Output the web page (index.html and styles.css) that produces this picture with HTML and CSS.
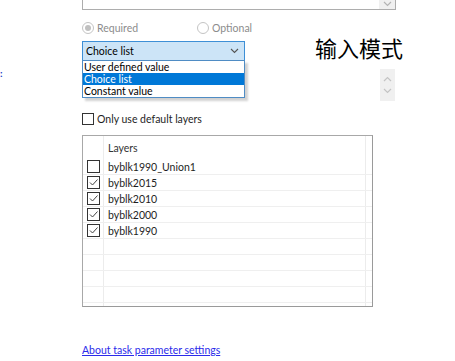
FILE: index.html
```html
<!DOCTYPE html>
<html lang="en">
<head>
  <meta charset="UTF-8" />
  <title>Task parameter</title>
  <link rel="stylesheet" href="styles.css">
</head>
<body>

  <span class="cut-label">:</span>
  <span class="note">输入模式</span>

  <div class="panel">
    <div class="top-box">
      <div class="scroll">
        <svg width="9" height="6" viewBox="0 0 9 6"><path d="M1 1l3.5 3.5L8 1" fill="none" stroke="#b4b4b4" stroke-width="1.2"/></svg>
      </div>
    </div>

    <div class="choice-row">
      <label class="radio"><span class="dot on"></span>Required</label>
      <label class="radio"><span class="dot"></span>Optional</label>
    </div>

    <div class="combo">
      <span>Choice list</span>
      <svg width="9" height="6" viewBox="0 0 9 6"><path d="M1 1l3.5 3.5L8 1" fill="none" stroke="#555" stroke-width="1.1"/></svg>
      <ul class="drop">
        <li>User defined value</li>
        <li class="sel">Choice list</li>
        <li>Constant value</li>
      </ul>
    </div>

    <div class="value-row">
      <div class="spin">
        <svg width="9" height="6" viewBox="0 0 9 6"><path d="M1 5l3.5-3.5L8 5" fill="none" stroke="#c4c4c4" stroke-width="1.2"/></svg>
        <svg width="9" height="6" viewBox="0 0 9 6"><path d="M1 1l3.5 3.5L8 1" fill="none" stroke="#c4c4c4" stroke-width="1.2"/></svg>
      </div>
    </div>

    <label class="check-row"><span class="box"></span>Only use default layers</label>

    <div class="layers">
      <div class="row head">
        <div class="c-check"></div>
        <div class="c-name">Layers</div>
        <div class="c-pad"></div>
      </div>
      <div class="row">
        <div class="c-check"><span class="box"></span></div>
        <div class="c-name">byblk1990_Union1</div>
        <div class="c-pad"></div>
      </div>
      <div class="row">
        <div class="c-check"><span class="box"><svg width="11" height="11" viewBox="0 0 11 11"><path d="M2 5.5l2.5 2.5L9.5 2.5" fill="none" stroke="#444" stroke-width="1"/></svg></span></div>
        <div class="c-name">byblk2015</div>
        <div class="c-pad"></div>
      </div>
      <div class="row">
        <div class="c-check"><span class="box"><svg width="11" height="11" viewBox="0 0 11 11"><path d="M2 5.5l2.5 2.5L9.5 2.5" fill="none" stroke="#444" stroke-width="1"/></svg></span></div>
        <div class="c-name">byblk2010</div>
        <div class="c-pad"></div>
      </div>
      <div class="row">
        <div class="c-check"><span class="box"><svg width="11" height="11" viewBox="0 0 11 11"><path d="M2 5.5l2.5 2.5L9.5 2.5" fill="none" stroke="#444" stroke-width="1"/></svg></span></div>
        <div class="c-name">byblk2000</div>
        <div class="c-pad"></div>
      </div>
      <div class="row">
        <div class="c-check"><span class="box"><svg width="11" height="11" viewBox="0 0 11 11"><path d="M2 5.5l2.5 2.5L9.5 2.5" fill="none" stroke="#444" stroke-width="1"/></svg></span></div>
        <div class="c-name">byblk1990</div>
        <div class="c-pad"></div>
      </div>
      <div class="row"><div class="c-check"></div><div class="c-name"></div><div class="c-pad"></div></div>
      <div class="row"><div class="c-check"></div><div class="c-name"></div><div class="c-pad"></div></div>
      <div class="row"><div class="c-check"></div><div class="c-name"></div><div class="c-pad"></div></div>
      <div class="row"><div class="c-check"></div><div class="c-name"></div><div class="c-pad"></div></div>
      <div class="row tail"><div class="c-check"></div><div class="c-name"></div><div class="c-pad"></div></div>
    </div>

    <a class="help-link" href="#">About task parameter settings</a>
  </div>

</body>
</html>
```

FILE: styles.css
```css
* {
  box-sizing: border-box;
}

body {
  font-family: 'Lato', sans-serif;
  font-size: 10.5px;
  margin: 0;
  padding: 0;
  background: #fff;
  color: #1e1e1e;
  position: relative;
  height: 361px;
  overflow: hidden;
}

.cut-label {
  position: absolute;
  left: 0;
  top: 67px;
  color: #2340c8;
  font-size: 10px;
  font-weight: bold;
  line-height: 12px;
}

.note {
  position: absolute;
  left: 315px;
  top: 33px;
  font-family: 'Noto Sans CJK SC', sans-serif;
  font-size: 22px;
  line-height: 28px;
  color: #000;
}

.panel {
  margin-left: 82px;
  width: 314px;
}

.top-box {
  height: 10px;
  border: 1px solid #adadad;
  border-top: none;
  display: flex;
  justify-content: flex-end;
}

.scroll {
  width: 16px;
  background: #f0f0f0;
  display: flex;
  justify-content: center;
  padding-top: 1px;
}

.choice-row {
  display: grid;
  grid-template-columns: 115px auto;
  margin-top: 12px;
  height: 12px;
}

.radio {
  display: flex;
  align-items: center;
  color: #8c8c8c;
  line-height: 12px;
}

.dot {
  width: 12px;
  height: 12px;
  border: 1px solid #c4c4c4;
  border-radius: 50%;
  margin-right: 3px;
  display: flex;
  align-items: center;
  justify-content: center;
}

.dot.on::after {
  content: "";
  width: 6px;
  height: 6px;
  border-radius: 50%;
  background: #c0c0c0;
}

.combo {
  position: relative;
  margin-top: 7px;
  width: 163px;
  height: 20px;
  border: 1px solid #3d8fd6;
  background: #cce4f7;
  display: flex;
  align-items: center;
  justify-content: space-between;
  padding: 0 5px 0 3px;
  color: #000;
}

.drop {
  position: absolute;
  top: 18px;
  left: -1px;
  width: 163px;
  margin: 0;
  padding: 0;
  list-style: none;
  background: #fff;
  border: 1px solid #4f8cc4;
  box-shadow: 3px 3px 2px rgba(0, 0, 0, 0.18);
  z-index: 2;
}

.drop li {
  height: 12px;
  line-height: 12px;
  padding-left: 1px;
  color: #000;
  overflow: hidden;
}

.drop li.sel {
  background: #0078d7;
  color: #fff;
}

.value-row {
  margin-top: 8px;
  height: 32px;
  display: flex;
  justify-content: flex-end;
  padding-right: 1px;
}

.spin {
  width: 15px;
  background: #f0f0f0;
  display: flex;
  flex-direction: column;
  align-items: center;
  justify-content: space-around;
  padding: 4px 0;
}

.check-row {
  margin-top: 12px;
  display: flex;
  align-items: center;
  height: 12px;
  line-height: 12px;
}

.box {
  width: 13px;
  height: 13px;
  border: 1px solid #333;
  background: #fff;
  display: inline-flex;
  align-items: center;
  justify-content: center;
}

.check-row .box {
  width: 12px;
  height: 12px;
  margin-right: 3px;
}

.layers {
  margin-top: 10px;
  width: 291px;
  height: 172px;
  border: 1px solid #a8a8a8;
  border-right-color: #9a9a9a;
  border-bottom-color: #9a9a9a;
  overflow: hidden;
}

.row {
  display: flex;
  height: 16px;
  border-bottom: 1px solid #efefef;
}

.row.head {
  height: 23px;
  border-bottom: none;
}

.row.tail {
  border-bottom: none;
}

.c-check {
  width: 21px;
  border-right: 1px solid #ececec;
  display: flex;
  align-items: center;
  padding-left: 4px;
}

.c-name {
  flex: 1;
  border-right: 1px solid #ececec;
  padding-left: 4px;
  display: flex;
  align-items: center;
  color: #1e1e1e;
}

.head .c-name {
  color: #333;
}

.c-pad {
  width: 6px;
}

.help-link {
  display: block;
  margin-top: 37px;
  color: #2b2bea;
  text-decoration: underline;
}
```
